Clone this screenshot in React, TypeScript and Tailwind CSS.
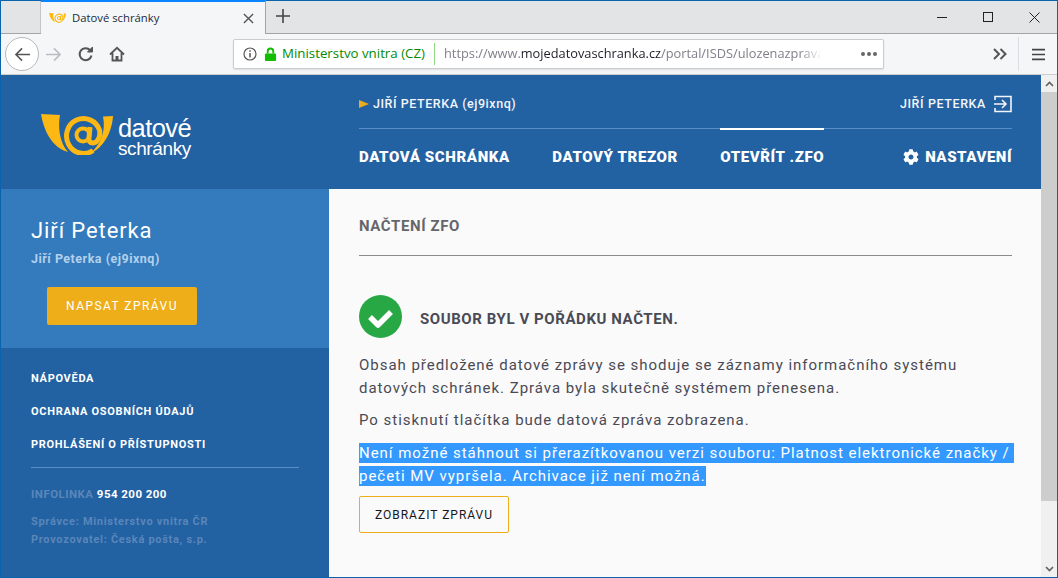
import { FaCog } from 'react-icons/fa'

const NAV = ['DATOVÁ SCHRÁNKA', 'DATOVÝ TREZOR', 'OTEVŘÍT .ZFO']
const LINKS = ['NÁPOVĚDA', 'OCHRANA OSOBNÍCH ÚDAJŮ', 'PROHLÁŠENÍ O PŘÍSTUPNOSTI']

function Horn({ size = 72 }: { size?: number }) {
  return (
    <svg viewBox="0 0 72 41" width={size} height={size * 41 / 72} fill="none">
      <path d="M0 0 L19 1 C17 12 18 28 27 38 C12 34 3 18 0 0 Z" fill="#fdb813" />
      <path d="M52 36.500 A17 17.500 0 1 1 58.500 16 C60 23 56 29 52 29 C49 29 47.500 27 48 24 L49 13" stroke="#fdb813" strokeWidth={5} />
      <circle cx="42" cy="21" r="6.500" stroke="#fdb813" strokeWidth={4} />
      <path d="M62 2.500 L72 2 C71 17 64 33 48 40.500 C60 31 65 17 62 2.500 Z" fill="#fdb813" />
    </svg>
  )
}

function BrowserChrome() {
  return (
    <div className="shrink-0 font-['Open_Sans',sans-serif]">
      <div className="h-[34px] flex bg-[#e3e4e6] border-b border-[#a3a4a6] border-t border-t-[#0a64ad]">
        <div className="w-10 border-r border-[#c4c5c7]" />
        <div className="w-[225px] -mt-px h-[34px] bg-[#f5f6f8] border-t-2 border-[#0a84ff] border-r border-r-[#a3a4a6] flex items-center pl-2 pr-[11px]">
          <Horn size={17} />
          <span className="ml-[6px] flex-1 text-[11.300px] text-[#222a3a] font-['Open_Sans',sans-serif]">Datové schránky</span>
          <svg viewBox="0 0 12 12" width={11} height={11} stroke="#555" strokeWidth={1.5}><path d="M1 1l10 10M11 1L1 11" /></svg>
        </div>
        <div className="w-[34px] flex items-center justify-center">
          <svg viewBox="0 0 14 14" width={14} height={14} stroke="#444" strokeWidth={1.6} className="-mt-[2px]"><path d="M7 0v14M0 7h14" /></svg>
        </div>
        <div className="flex-1" />
        <div className="flex items-center text-[#222]">
          <div className="w-[46px] flex justify-center"><svg width={10} height={10} stroke="#222"><path d="M0 5.500h10" /></svg></div>
          <div className="w-[46px] flex justify-center"><svg width={10} height={10} stroke="#222" fill="none"><rect x=".5" y=".5" width="9" height="9" /></svg></div>
          <div className="w-[46px] flex justify-center"><svg width={11} height={11} stroke="#222"><path d="M.5.500l10 10M10.500.500l-10 10" /></svg></div>
        </div>
      </div>
      <div className="h-[41px] bg-[#f5f6f8] border-b border-[#cccdcf] flex items-center pl-[4px] pr-[6px]">
        <div className="w-[34px] h-[34px] rounded-full border border-[#b9b9bb] bg-white flex items-center justify-center">
          <svg viewBox="0 0 18 16" width={17} height={15} fill="none" stroke="#555" strokeWidth={1.7}><path d="M17 8H2M8.500 1.500L2 8l6.500 6.500" /></svg>
        </div>
        <svg viewBox="0 0 18 16" width={17} height={15} fill="none" stroke="#bcbcbe" strokeWidth={1.7} className="ml-[6px]"><path d="M1 8h15M9.500 1.500L16 8l-6.500 6.500" /></svg>
        <svg viewBox="0 0 16 16" width={16} height={16} fill="none" stroke="#555" strokeWidth={2} className="ml-[16px]"><path d="M13.500 9.500A6 6 0 1 1 12 4" /><path d="M14.500 1v5h-5z" fill="#555" strokeWidth={1} /></svg>
        <svg viewBox="0 0 16 16" width={16} height={16} fill="none" stroke="#555" strokeWidth={1.8} className="ml-[15px]"><path d="M1 8.500L8 1.800l7 6.700M3.500 7v7.500h9V7" /><rect x="6.500" y="10" width="3" height="5" fill="#555" strokeWidth={0} /></svg>
        <div className="ml-[108px] w-[651px] h-[30px] bg-white border border-[#ccc] rounded-[2px] shadow-[0_1px_2px_rgba(0,0,0,0.1)] flex items-center pl-[9px] pr-[6px]">
          <svg viewBox="0 0 14 14" width={14} height={14} fill="none" stroke="#555" strokeWidth={1.2}><circle cx="7" cy="7" r="6" /><path d="M7 6v4.500M7 3.200v1.500" strokeWidth={1.5} /></svg>
          <svg viewBox="0 0 14 16" width={13} height={15} className="ml-[7px]"><path d="M3 7V4.500a4 4 0 0 1 8 0V7h-2V4.500a2 2 0 0 0-4 0V7z" fill="#12bc00" /><rect x="1" y="7" width="12" height="8" rx="1" fill="#12bc00" /></svg>
          <span className="ml-[5px] text-[13.300px] text-[#058b00] whitespace-nowrap">Ministerstvo vnitra (CZ)</span>
          <div className="ml-[9px] w-px h-[22px] bg-[#8fdc85]" />
          <span className="ml-[9px] flex-1 overflow-hidden whitespace-nowrap text-[12.800px] text-[#80808a] [mask-image:linear-gradient(to_right,black_94%,transparent)]">
            https://www.<span className="text-[#1e1e28]">mojedatovaschranka.cz</span>/portal/ISDS/ulozenazprava
          </span>
          <span className="ml-[39px] flex gap-[2px]">
            <i className="w-[4px] h-[4px] rounded-full bg-[#666]" />
            <i className="w-[4px] h-[4px] rounded-full bg-[#666]" />
            <i className="w-[4px] h-[4px] rounded-full bg-[#666]" />
          </span>
        </div>
        <div className="flex-1" />
        <svg viewBox="0 0 14 12" width={14} height={12} fill="none" stroke="#555" strokeWidth={2}><path d="M1 1l5 5-5 5M7.500 1l5 5-5 5" /></svg>
        <div className="ml-[11px] w-px h-[34px] bg-[#dcdde0]" />
        <svg viewBox="0 0 12 12" width={13} height={13} fill="none" stroke="#444" strokeWidth={1.4} className="ml-[13px] mr-[6px]"><path d="M0 1.500h12M0 6h12M0 10.500h12" /></svg>
      </div>
    </div>
  )
}

function Header() {
  return (
    <div className="h-[114px] bg-[#2261a2] flex text-white shrink-0">
      <div className="w-[328px] pl-[40px] pt-[39px] flex items-start">
        <Horn />
        <div className="ml-[5px] mt-[2px] font-['Liberation_Sans',sans-serif] text-white">
          <div className="text-[25.500px] leading-[24px] tracking-[-0.6px]">datové</div>
          <div className="text-[19px] leading-[17px] tracking-[-0.4px]">schránky</div>
        </div>
      </div>
      <div className="flex-1 pl-[30px] pr-[29px] font-['Roboto',sans-serif]">
        <div className="h-[54px] pt-[5px] border-b border-[#5a8cc6] flex items-center justify-between">
          <div className="flex items-center text-[12.500px] font-medium tracking-[0.55px] text-[#f2f5fa]">
            <svg width={10} height={8} viewBox="0 0 10 8" className="mr-[4px]"><path d="M0 0l10 4-10 4z" fill="#eeab1d" /></svg>
            JIŘÍ PETERKA (ej9ixnq)
          </div>
          <div className="flex items-center text-[12.500px] font-medium tracking-[0.6px] text-[#f2f5fa]">
            JIŘÍ PETERKA
            <svg viewBox="0 0 18 18" width={18} height={18} fill="none" stroke="#f2f5fa" strokeWidth={1.6} className="ml-[8px]"><path d="M1 5V1.500h16v15H1V13M0 9h11M8 5l4 4-4 4" /></svg>
          </div>
        </div>
        <div className="flex items-center justify-between">
          <div className="flex gap-[42.500px]">
            {NAV.map((item, i) => (
              <div key={item} className={`-mt-[1px] h-[60px] flex items-center text-[15px] font-black tracking-[0.6px] pb-[4px] border-t-2 ${i === 2 ? 'border-white' : 'border-transparent'}`}>{item}</div>
            ))}
          </div>
          <div className="flex items-center text-[15px] font-black tracking-[0.55px] -mt-[3px]">
            <FaCog size={16} className="mr-[6px]" />
            NASTAVENÍ
          </div>
        </div>
      </div>
    </div>
  )
}

function Sidebar() {
  return (
    <div className="w-[328px] shrink-0 bg-[#2261a2] font-['Roboto',sans-serif] flex flex-col">
      <div className="h-[159px] bg-[#337bbc] pl-[30px] pt-[28px]">
        <div className="text-[22px] leading-[28px] tracking-[0.9px] text-white">Jiří Peterka</div>
        <div className="mt-[6px] text-[12.500px] leading-[16px] font-bold tracking-[0.5px] text-[#b3d0ec]">Jiří Peterka (ej9ixnq)</div>
        <div className="ml-[16px] mt-[20px] w-[150px] h-[38px] rounded-[2px] bg-[#edae1a] text-white text-[12px] tracking-[1.45px] flex items-center justify-center">NAPSAT ZPRÁVU</div>
      </div>
      <div className="pl-[30px] pr-[30px] pt-[23px]">
        <div className="flex flex-col gap-[17px] pb-[14px] border-b border-[#5a8cc6]">
          {LINKS.map((l) => (
            <div key={l} className="text-[11px] leading-[16px] font-bold tracking-[0.7px] text-white">{l}</div>
          ))}
        </div>
        <div className="mt-[18px] text-[11.500px] leading-[16px] font-bold tracking-[0.45px] text-[#5a86ba]">
          INFOLINKA <span className="text-white">954 200 200</span>
        </div>
        <div className="mt-[11px] text-[11px] leading-[18px] font-bold tracking-[0.7px] text-[#5a86ba]">
          <div>Správce: Ministerstvo vnitra ČR</div>
          <div>Provozovatel: Česká pošta, s.p.</div>
        </div>
      </div>
    </div>
  )
}

function Content() {
  return (
    <div className="flex-1 min-w-0 bg-[#fafafa] pl-[30px] pr-[29px] font-['Roboto',sans-serif] text-[#4a4a55]">
      <div className="h-[67px] border-b border-[#8b8b8f] pt-[28px] text-[15px] leading-[18px] font-bold tracking-[0.6px] text-[#66666a]">NAČTENÍ ZFO</div>
      <div className="mt-[39px] flex items-center">
        <svg viewBox="0 0 43 43" width={43} height={43}>
          <circle cx="21.500" cy="21.500" r="21.500" fill="#28a745" />
          <path d="M11 22l8 8 13-13" fill="none" stroke="white" strokeWidth={5.500} strokeLinejoin="round" />
        </svg>
        <div className="ml-[18px] text-[15px] font-bold tracking-[0.58px] mt-[6px]">SOUBOR BYL V POŘÁDKU NAČTEN.</div>
      </div>
      <p className="mt-[16px] text-[15px] leading-[23px] tracking-[0.97px]">
        Obsah předložené datové zprávy se shoduje se záznamy informačního systému<br />datových schránek. Zpráva byla skutečně systémem přenesena.
      </p>
      <p className="mt-[9px] text-[15px] leading-[23px] tracking-[0.97px]">Po stisknutí tlačítka bude datová zpráva zobrazena.</p>
      <p className="mt-[10px] text-[15px] leading-[23px] tracking-[0.97px] text-white whitespace-nowrap">
        <span className="bg-[#3399ff] py-[1px]">Není možné stáhnout si přerazítkovanou verzi souboru: Platnost elektronické značky /&nbsp;</span><br />
        <span className="bg-[#3399ff] py-[1px]">pečeti MV vypršela. Archivace již není možná.</span>
      </p>
      <div className="mt-[8px] w-[150px] h-[37px] border border-[#edae1a] rounded-[2px] flex items-center justify-center text-[12px] tracking-[1px] text-[#16161e]">ZOBRAZIT ZPRÁVU</div>
    </div>
  )
}

export default function App() {
  return (
    <div className="w-[1058px] h-[578px] overflow-hidden flex flex-col border-x border-b border-[#0a64ad] bg-white">
      <BrowserChrome />
      <div className="flex-1 flex min-h-0">
        <div className="flex-1 flex flex-col min-w-0">
          <Header />
          <div className="flex-1 flex min-h-0">
            <Sidebar />
            <Content />
          </div>
        </div>
        <div className="w-4 shrink-0 bg-[#f0f0f0] flex flex-col">
          <div className="h-[17px] flex items-center justify-center">
            <svg width={9} height={6} fill="none" stroke="#606060" strokeWidth={1.6}><path d="M1 5l3.500-3.500L8 5" /></svg>
          </div>
          <div className="h-[409px] bg-[#cdcdcd]" />
          <div className="flex-1" />
          <div className="h-[17px] flex items-center justify-center">
            <svg width={9} height={6} fill="none" stroke="#606060" strokeWidth={1.6}><path d="M1 1l3.500 3.500L8 1" /></svg>
          </div>
        </div>
      </div>
    </div>
  )
}
